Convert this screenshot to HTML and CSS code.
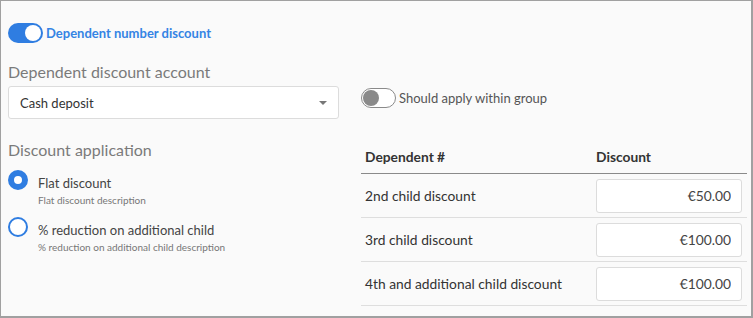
FILE: index.html
```html
<!DOCTYPE html>
<html lang="en">
<head>
    <meta charset="UTF-8">
    <meta name="viewport" content="width=device-width, initial-scale=1.0">
    <title>Dependent number discount</title>
    <link rel="stylesheet" href="styles.css">
</head>
<body>
    <div class="panel">
        <div class="switch-row">
            <span class="switch on"><span class="knob"></span></span>
            <span class="switch-title">Dependent number discount</span>
        </div>

        <div class="columns">
            <div class="left">
                <div class="field-label">Dependent discount account</div>
                <div class="select">
                    <span>Cash deposit</span>
                    <span class="caret"></span>
                </div>

                <div class="field-label section">Discount application</div>
                <div class="radio-item">
                    <span class="radio checked"></span>
                    <div>
                        <div class="radio-label">Flat discount</div>
                        <div class="radio-desc">Flat discount description</div>
                    </div>
                </div>
                <div class="radio-item">
                    <span class="radio"></span>
                    <div>
                        <div class="radio-label">% reduction on additional child</div>
                        <div class="radio-desc">% reduction on additional child description</div>
                    </div>
                </div>
            </div>

            <div class="right">
                <div class="switch-row small">
                    <span class="switch off"><span class="knob"></span></span>
                    <span class="switch-text">Should apply within group</span>
                </div>

                <table class="discounts">
                    <thead>
                        <tr>
                            <th>Dependent #</th>
                            <th class="col-amount">Discount</th>
                        </tr>
                    </thead>
                    <tbody>
                        <tr>
                            <td>2nd child discount</td>
                            <td class="col-amount"><input type="text" value="€50.00"></td>
                        </tr>
                        <tr>
                            <td>3rd child discount</td>
                            <td class="col-amount"><input type="text" value="€100.00"></td>
                        </tr>
                        <tr>
                            <td>4th and additional child discount</td>
                            <td class="col-amount"><input type="text" value="€100.00"></td>
                        </tr>
                    </tbody>
                </table>
            </div>
        </div>
    </div>
</body>
</html>
```

FILE: styles.css
```css
html, body {
    margin: 0;
    padding: 0;
}

body {
    font-family: Lato, 'Liberation Sans', sans-serif;
    color: #333;
    background: #fff;
}

.panel {
    box-sizing: border-box;
    width: 753px;
    height: 318px;
    border: 1px solid #a0a0a0;
    border-bottom-width: 2px;
    border-right-width: 2px;
    background: #fafafa;
    padding: 22px 0 0 7px;
}

.switch-row {
    display: flex;
    align-items: center;
    gap: 3px;
    height: 20px;
}

.switch {
    box-sizing: border-box;
    position: relative;
    width: 35px;
    height: 20px;
    border-radius: 10px;
    flex: none;
}

.switch .knob {
    position: absolute;
    top: 2px;
    width: 16px;
    height: 16px;
    border-radius: 50%;
}

.switch.on {
    background: #2f7de1;
}

.switch.on .knob {
    right: 2px;
    background: #fff;
}

.switch.off {
    background: #fff;
    border: 1px solid #8a8a8a;
}

.switch.off .knob {
    top: 1px;
    left: 1px;
    background: #8a8a8a;
}

.switch-title {
    font-size: 13px;
    font-weight: 700;
    color: #3584e4;
}

.switch-text {
    font-size: 13px;
    color: #555;
}

.columns {
    display: flex;
    gap: 22px;
}

.left {
    width: 331px;
    flex: none;
}

.right {
    width: 386px;
    flex: none;
    padding-top: 45px;
}

.field-label {
    font-size: 16px;
    line-height: 20px;
    color: #7a7a7a;
    margin-top: 19px;
}

.field-label.section {
    margin-top: 21px;
}

.select {
    box-sizing: border-box;
    height: 33px;
    margin-top: 4px;
    background: #fff;
    border: 1px solid #dcdcdc;
    border-radius: 3px;
    display: flex;
    align-items: center;
    justify-content: space-between;
    padding: 0 11px 0 11px;
    font-size: 13px;
    color: #333;
}

.caret {
    width: 0;
    height: 0;
    border-left: 4px solid transparent;
    border-right: 4px solid transparent;
    border-top: 4px solid #777;
}

.radio-item {
    display: flex;
    gap: 10px;
    margin-top: 10px;
}

.radio-item + .radio-item {
    margin-top: 10px;
}

.radio {
    box-sizing: border-box;
    width: 20px;
    height: 20px;
    border-radius: 50%;
    border: 2px solid #2f7de1;
    background: #fff;
    flex: none;
}

.radio.checked {
    border-width: 6px;
}

.radio-label {
    font-size: 13px;
    line-height: 18px;
    color: #444;
    margin-top: 4px;
}

.radio-desc {
    font-size: 10px;
    line-height: 14px;
    color: #777;
    margin-top: 1px;
}

.discounts {
    width: 100%;
    border-collapse: collapse;
    margin-top: 32px;
    font-size: 13.8px;
}

.discounts th {
    text-align: left;
    font-weight: 700;
    color: #333;
    height: 33px;
    padding: 0 4px;
    border-bottom: 1px solid #8a8a8a;
}

.discounts td {
    height: 43px;
    padding: 0 4px;
    color: #333;
    border-bottom: 1px solid #dedede;
}

.discounts .col-amount {
    width: 146px;
    padding-right: 5px;
}

.discounts input {
    box-sizing: border-box;
    width: 146px;
    height: 34px;
    display: block;
    font-family: Lato, 'Liberation Sans', sans-serif;
    font-size: 13.8px;
    color: #444;
    text-align: right;
    padding: 0 10px;
    background: #fff;
    border: 1px solid #dcdcdc;
    border-radius: 3px;
}
```
